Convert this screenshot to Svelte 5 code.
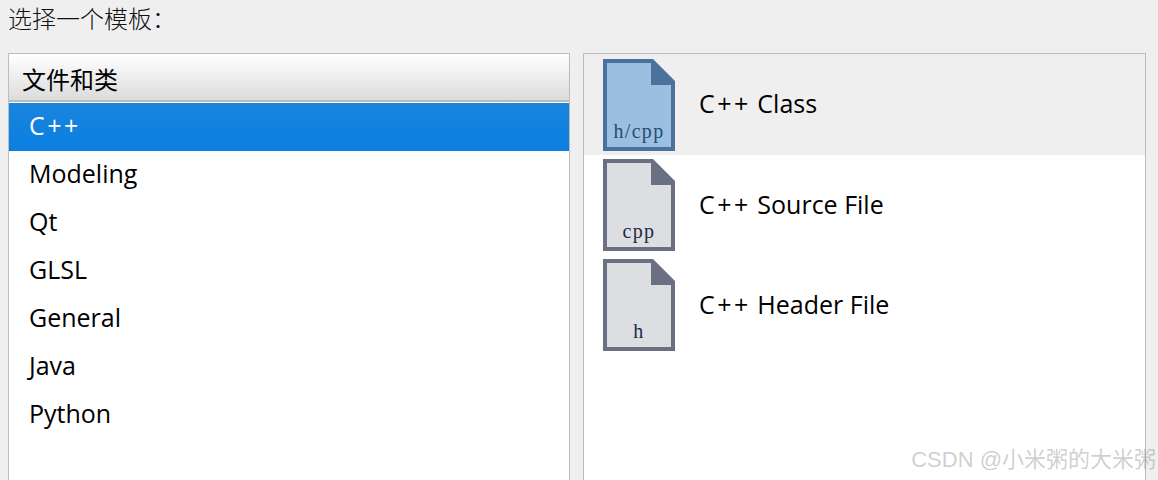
<script>
  const categories = ["C++", "Modeling", "Qt", "GLSL", "General", "Java", "Python"];
  const templates = [
    { name: "Class", tag: "h/cpp", active: true },
    { name: "Source File", tag: "cpp", active: false },
    { name: "Header File", tag: "h", active: false }
  ];
</script>

<div class="dialog">
  <div class="title">选择一个模板：</div>
  <div class="panes">
    <div class="pane left">
      <div class="head">文件和类</div>
      {#each categories as cat, i}
        <div class="cat" class:sel={i === 0} class:pp={cat === "C++"}>{cat}</div>
      {/each}
    </div>
    <div class="pane right">
      {#each templates as t}
        <div class="tpl" class:active={t.active}>
          <svg class="doc" width="72" height="92" viewBox="0 0 72 92">
            <path d="M2 2H48L70 24V90H2Z" class="body" />
            <path d="M48 0H0V92H72V22L50 0ZM48 4V26H68V88H4V4Z" class="edge" fill-rule="evenodd" />
            <text x="36" y="79" text-anchor="middle">{t.tag}</text>
          </svg>
          <span class="name"><span class="pp">C++</span> {t.name}</span>
        </div>
      {/each}
    </div>
  </div>
  <div class="mark">CSDN @小米粥的大米粥</div>
</div>

<style>
  :global(body) { background: #efefef; }
  .dialog {
    position: relative;
    height: 480px;
    overflow: hidden;
    font-family: "Open Sans", "Noto Sans CJK SC", sans-serif;
    color: #000;
  }
  .title { height: 53px; padding: 2px 0 0 8px; box-sizing: border-box; font-family: "Noto Sans CJK SC", sans-serif; font-size: 24px; line-height: 32px; font-weight: 300; color: #111; }
  .panes { display: flex; gap: 13px; padding-left: 8px; }
  .pane { height: 440px; background: #fff; border: 1px solid #bdbdbd; box-sizing: border-box; }
  .left { width: 562px; }
  .right { width: 563px; }
  .head {
    height: 48px;
    padding-left: 13px;
    font-family: "Noto Sans CJK SC", sans-serif;
    font-size: 24px;
    line-height: 50px;
    box-sizing: border-box;
    background: linear-gradient(#ffffff, #dcdcdc);
    border-bottom: 2px solid #bbb;
    margin-bottom: 1px;
  }
  .cat { height: 48px; line-height: 44px; padding-left: 20px; font-size: 25px; }
  .cat.sel { color: #fff; background: linear-gradient(#1a84dc, #0a7fe0); }
  .pp { letter-spacing: 2.5px; }
  .tpl { height: 100px; display: flex; align-items: center; gap: 24px; padding-left: 19px; box-sizing: border-box; }
  .tpl.active { height: 101px; background: #efefef; }
  .name { font-size: 25px; line-height: 34px; padding-bottom: 3px; }
  .doc { flex: none; }
  .body { fill: #dddee2; }
  .edge { fill: #6a7082; }
  .doc text { font-family: "Liberation Serif", serif; font-size: 20px; letter-spacing: 1.3px; fill: #1c2c44; }
  .active .body { fill: #9bbfe0; }
  .active .edge { fill: #4a729d; }
  .active .doc text { fill: #2b4a70; }
  .mark {
    position: absolute;
    right: 2px;
    top: 445px;
    font-family: "Liberation Sans", "Noto Sans CJK SC", sans-serif;
    font-size: 22px;
    line-height: 30px;
    color: rgba(120, 120, 120, 0.36);
  }
</style>
